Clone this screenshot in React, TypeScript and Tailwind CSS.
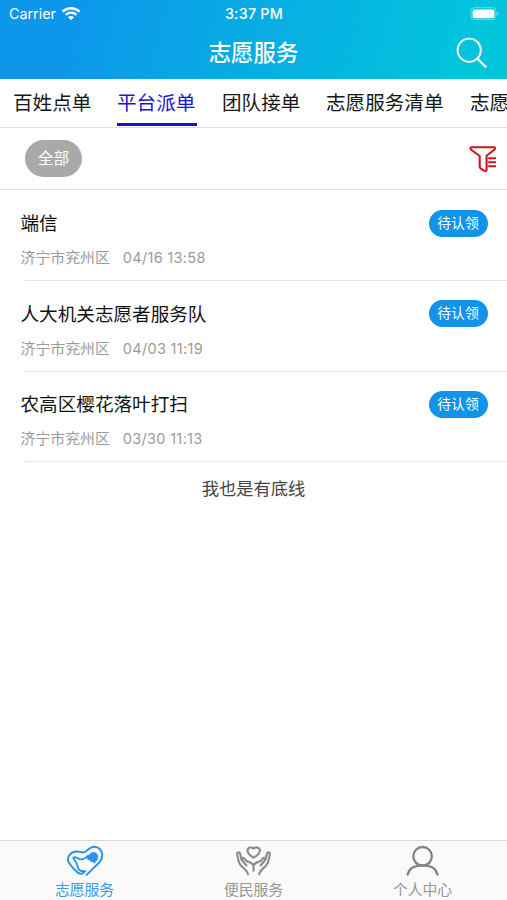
import React from "react";

const tabs = ["百姓点单", "平台派单", "团队接单", "志愿服务清单", "志愿"];

const orders = [
  { title: "端信", area: "济宁市兖州区", time: "04/16 13:58" },
  { title: "人大机关志愿者服务队", area: "济宁市兖州区", time: "04/03 11:19" },
  { title: "农高区樱花落叶打扫", area: "济宁市兖州区", time: "03/30 11:13" },
];

function WifiIcon() {
  return (
    <svg width="20" height="16" viewBox="0 0 20 16" className="ml-[4px]" fill="none" stroke="white">
      <path d="M1.6 5.6C6.4 1.1 13.6 1.1 18.4 5.6" strokeWidth="2.6" />
      <path d="M4.7 8.9C7.8 6.1 12.2 6.1 15.3 8.9" strokeWidth="2.4" />
      <path d="M7 11.2C8.8 9.6 11.2 9.6 13 11.2L10 14.3Z" fill="white" stroke="none" />
    </svg>
  );
}

function BatteryIcon() {
  return (
    <svg width="30" height="14" viewBox="0 0 30 14" fill="none">
      <rect x="1" y="0.7" width="25" height="12" rx="3.5" stroke="white" strokeOpacity="0.4" />
      <rect x="2.6" y="2.4" width="21.8" height="8.8" rx="2" fill="white" />
      <path d="M27.5 4.8C29.2 5.5 29.2 8.3 27.5 9Z" fill="white" fillOpacity="0.5" />
    </svg>
  );
}

function SearchIcon() {
  return (
    <svg width="32" height="32" viewBox="0 0 32 32" fill="none" stroke="white" strokeWidth="1.9" className="-ml-px">
      <circle cx="13.2" cy="13.2" r="11.6" />
      <path d="M21.3 21.5L30.3 30.5" strokeWidth="2.2" />
    </svg>
  );
}

function FilterIcon() {
  return (
    <svg width="28" height="28" viewBox="0 0 28 28" fill="none" stroke="#c9181c" strokeWidth="2.1" strokeLinejoin="round" strokeLinecap="round">
      <path d="M2.4 2.2H25Q26.8 2.5 25.6 4.5L17.6 10.8V25Q17 26.6 15.4 25.9L11.8 23.6Q10.7 22.8 10.7 21.6V11L1.9 4.5Q0.6 2.6 2.4 2.2Z" />
      <path d="M20 13.2H26.2M20 17.2H26.2M20 21.3H26.2" strokeWidth="2" />
    </svg>
  );
}

function HeartHandIcon() {
  return (
    <svg width="38" height="32" viewBox="0 0 38 32" fill="none" stroke="#2d93e8" strokeWidth="2" strokeLinecap="round" strokeLinejoin="round">
      <path d="M20.6 29.9L33.2 17.5C37.2 13.2 37 7.2 34 4.2C30.8 1.1 26.4 1.5 22.8 4C20.8 5.5 19.5 7.5 17 7.4C14.6 7.3 13.2 6.1 10 6.5C4.8 7.1 1.2 11.2 2 15.4C2.6 18.6 5 20.8 8.2 24.2L12.3 27.9C14.4 29.6 17.7 28.8 18.9 26.2" />
      <path d="M18.9 26.2C15 26.5 12.2 24.6 11.7 22C11.2 19.2 10.6 17.8 8.9 15.5C7.5 13.7 6.6 12.7 7.9 12.3C10.6 11.9 12.4 13.9 15 14.4C17.6 14.8 19.6 13.1 21.8 10.9" strokeWidth="1.8" />
      <path d="M20.5 11.8L25.6 8C28 6.7 31.4 8.2 31.8 11.2C32 13.9 30.4 16.2 28.2 18L26.6 16.6L24.8 16.4L24 14.8L22.2 14.4Z" fill="#2d93e8" strokeWidth="0.9" />
    </svg>
  );
}

function CareHandsIcon() {
  return (
    <svg width="38" height="32" viewBox="0 0 38 32" fill="none" stroke="#8b8b8b" strokeWidth="2.1" strokeLinecap="round" strokeLinejoin="round">
      <path d="M18.5 12.7C15.3 10.6 12.2 8.6 12.5 5.4C12.8 2.1 16.5 1.5 18.5 3.6C20.5 1.5 24.6 2.1 24.9 5.4C25.2 8.6 21.8 10.6 18.5 12.7Z" />
      <path d="M13 29.2C12.3 25.8 9.1 23.7 5.8 20.4C3.8 18.4 3.5 17.1 3 13.7L2.1 9.1C1.9 7.3 4.5 6.5 5.1 8.6L6.5 14.2" />
      <path d="M11.5 20.5L6.8 15C6.2 12.8 8.2 12.2 9.4 13.7L11.5 16C14.8 17 17 18 18.5 20V25.8" />
      <path d="M24.2 29.2C24.8 25.8 28 23.7 31.2 20.4C33.2 18.4 33.5 17.1 34 13.7L34.9 9.1C35.1 7.3 32.6 6.5 32 8.6L30.5 14.2" />
      <path d="M25.5 20.5L30.2 15C30.8 12.8 28.8 12.2 27.6 13.7L25.5 16C22.2 17 20 18 18.5 20" />
    </svg>
  );
}

function PersonIcon() {
  return (
    <svg width="34" height="32" viewBox="0 0 34 32" fill="none" stroke="#838383" strokeWidth="2.3" strokeLinecap="round">
      <circle cx="16.6" cy="11.3" r="9.3" />
      <path d="M1.7 29.6C3 23.4 9 20.3 16.6 20.3S30.2 23.4 31.5 29.6" />
    </svg>
  );
}

const navItems = [
  { label: "志愿服务", icon: <HeartHandIcon />, color: "text-[#3a99e5]" },
  { label: "便民服务", icon: <CareHandsIcon />, color: "text-[#969696]" },
  { label: "个人中心", icon: <PersonIcon />, color: "text-[#969696]" },
];

export default function App() {
  return (
    <div className="flex h-[900px] w-[507px] flex-col overflow-hidden bg-white font-[Inter,'Noto_Sans_CJK_SC',sans-serif]">
      <header className="h-[79px] shrink-0 bg-linear-[105deg,#0d97eb_15%,#02c5dc_92%] text-white">
        <div className="grid h-[27px] grid-cols-3 items-center pr-[7px] pl-[9px] text-[14.3px] leading-5">
          <div className="flex items-center">
            <span className="w-[48px] whitespace-nowrap">Carrier</span>
            <WifiIcon />
          </div>
          <span className="-ml-px text-center font-medium tracking-[0.25px]">3:37 PM</span>
          <div className="flex justify-end">
            <BatteryIcon />
          </div>
        </div>
        <div className="grid h-[52px] grid-cols-[50px_1fr_50px] items-center">
          <span />
          <h1 className="text-center text-[22.4px] leading-[52px] font-medium">志愿服务</h1>
          <SearchIcon />
        </div>
      </header>

      <nav className="flex h-[49px] shrink-0 gap-[25px] overflow-hidden border-b border-[#dedede] pl-[13px] text-[19.6px] whitespace-nowrap text-[#161616]">
        {tabs.map((tab, i) => (
          <span
            key={tab}
            className={
              i === 1
                ? "h-[47px] w-[80px] shrink-0 border-b-[3px] border-[#1c12d6] leading-[48px] text-[#1c12d6]"
                : i === 3
                  ? "h-[47px] w-[119px] shrink-0 leading-[48px]"
                  : "h-[47px] w-[79px] shrink-0 leading-[48px]"
            }
          >
            {tab}
          </span>
        ))}
      </nav>

      <div className="flex h-[62px] shrink-0 items-center justify-between border-b border-[#dedede] pr-[10px] pl-[25px]">
        <button className="h-[37px] w-[57px] rounded-full bg-[#a9a9a9] text-[15.8px] leading-[37px] text-white">全部</button>
        <FilterIcon />
      </div>

      <ul className="shrink-0">
        {orders.map((order) => (
          <li key={order.title} className="h-[90.5px]">
            <div className="flex h-[90px] justify-between pt-[19px] pr-[19.5px] pl-[20.5px]">
              <div>
                <h2 className="text-[18.6px] leading-7 text-[#111]">{order.title}</h2>
                <p className="mt-[8px] flex items-center gap-[13px] text-[14.9px] leading-[26px] text-[#9b9b9b]">
                  <span>{order.area}</span>
                  <span className="text-[14.5px] tracking-[0.3px] whitespace-nowrap">{order.time}</span>
                </p>
              </div>
              <span className="mt-[0.7px] h-[27px] w-[59px] rounded-full bg-[#1093e9] text-center text-[13.8px] leading-[26px] text-white">
                待认领
              </span>
            </div>
            <div className="ml-[25px] h-px bg-[#e6e6e6]" />
          </li>
        ))}
      </ul>

      <p className="pt-[13px] text-center text-[17.3px] leading-[28px] text-[#444]">我也是有底线</p>

      <footer className="mt-auto grid h-[60px] shrink-0 grid-cols-3 border-t border-[#d9d9d9] bg-[#fafafa]">
        {navItems.map((item) => (
          <div key={item.label} className={`flex flex-col items-center pt-[4px] ${item.color}`}>
            {item.icon}
            <span className="text-[14.8px] leading-[26px]">{item.label}</span>
          </div>
        ))}
      </footer>
    </div>
  );
}
